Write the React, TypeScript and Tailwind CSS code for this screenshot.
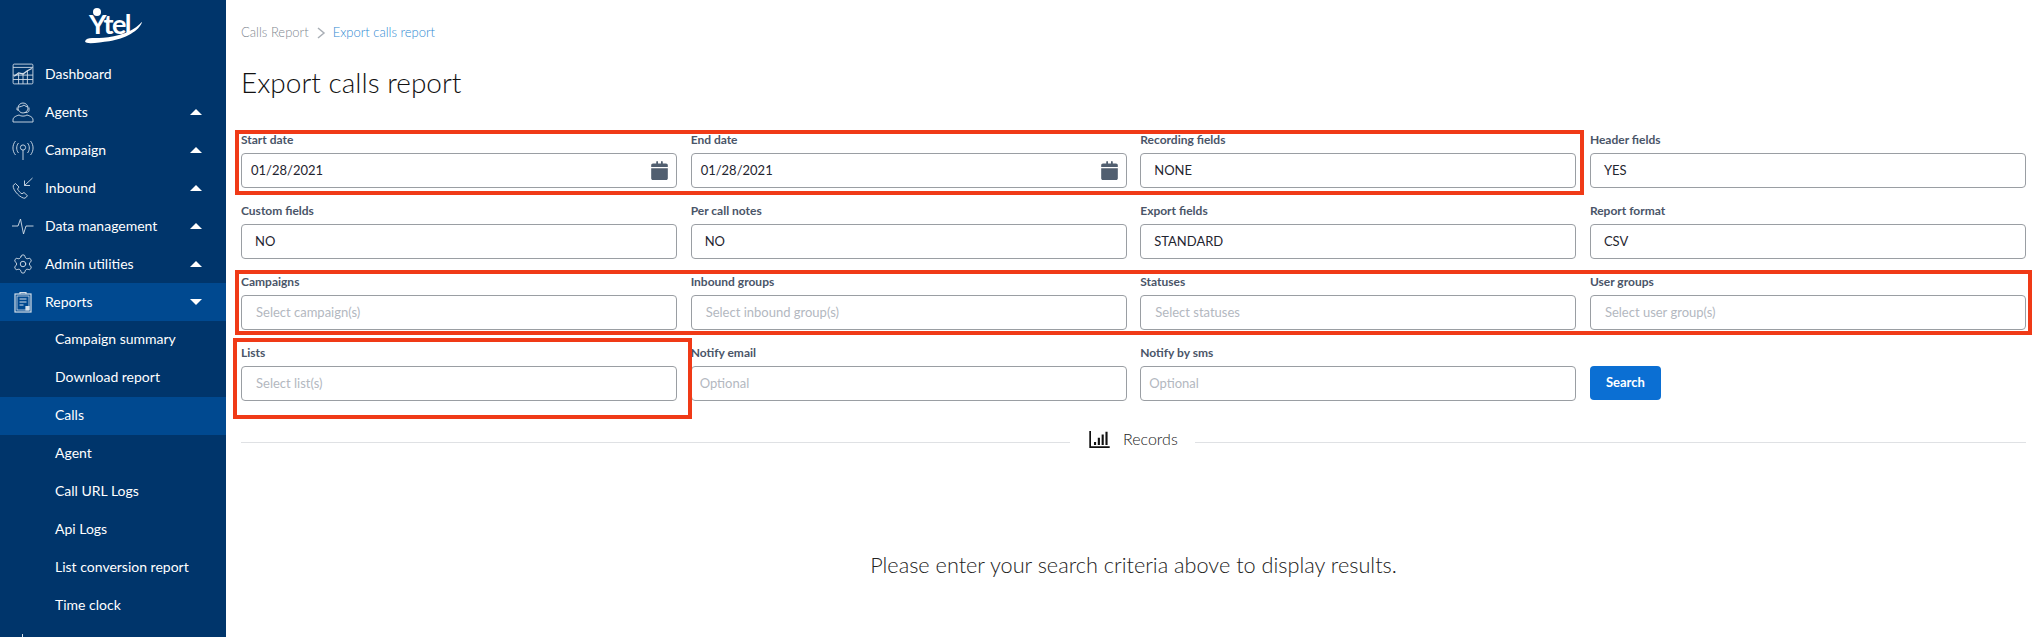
import React from "react";
import { Settings } from "lucide-react";

type IconProps = { className?: string };

const DashboardIcon = ({ className }: IconProps) => (
  <svg viewBox="0 0 20 20" className={className} fill="none" stroke="currentColor" strokeWidth="0.8">
    <rect x="1" y="1" width="18" height="18" rx="1" />
    <path d="M1 4h18M1 11h18M1 15h18M6 10v9M10 9v10M14 7v12" />
    <path d="M2 12l4-3 4 1 4-3 4-2" strokeWidth="1.2" />
  </svg>
);

const AgentIcon = ({ className }: IconProps) => (
  <svg viewBox="0 0 22 22" className={className} fill="none" stroke="currentColor" strokeWidth="0.9">
    <circle cx="11" cy="7" r="5" />
    <path d="M6 6c2 0 5-1 6-2 1 1 3 2 4 2" />
    <path d="M5 6.500v2.500h1.400M17 6.500v3c0 1-1 2-3 2h-1.500" />
    <path d="M1 21v-2c0-3 3-4 6-5 2 1.500 6 1.500 8 0 3 1 6 2 6 5v2z" />
  </svg>
);

const CampaignIcon = ({ className }: IconProps) => (
  <svg viewBox="0 0 22 22" className={className} fill="none" stroke="currentColor" strokeWidth="0.9">
    <circle cx="11" cy="8.500" r="2.600" />
    <path d="M11 11v10" />
    <path d="M6.500 4c-2.400 2.800-2.400 7.200 0 10M15.500 4c2.400 2.800 2.400 7.200 0 10" />
    <path d="M3.500 2c-3.400 4-3.400 10 0 14M18.500 2c3.400 4 3.400 10 0 14" />
  </svg>
);

const InboundIcon = ({ className }: IconProps) => (
  <svg viewBox="0 0 22 22" className={className} fill="none" stroke="currentColor" strokeWidth="0.9">
    <path d="M3.500 6.500L1.200 8.500c-.4 2.500 1.800 6 4.300 8.500 2.500 2.500 5.500 4.500 7.500 4.200l2.500-2.400-3.500-3.300-2 1.300c-1.500-.7-3.700-3-4.500-4.800l1.500-2z" />
    <path d="M20.500 1l-8 7.500M12.500 3.500v5h5.500" />
  </svg>
);

const PulseIcon = ({ className }: IconProps) => (
  <svg viewBox="0 0 22 22" className={className} fill="none" stroke="currentColor" strokeWidth="0.9">
    <path d="M0 11h6l2.500-7 3 15 2.500-8h7.500" />
  </svg>
);

const GearIcon = ({ className }: IconProps) => <Settings className={className} strokeWidth={1} />;

const ClipboardIcon = ({ className }: IconProps) => (
  <svg viewBox="0 0 20 22" className={className} fill="none" stroke="currentColor" strokeWidth="1.2">
    <rect x="2" y="3" width="16" height="18" />
    <rect x="4" y="5" width="12" height="14" strokeWidth="0.8" />
    <path d="M7 3V1.500h6V3" />
    <path d="M6.500 8h7M6.500 11h7M6.500 14h4" />
    <path d="M13 15.500h3V19h-3z" fill="currentColor" />
  </svg>
);

const CalendarIcon = ({ className }: IconProps) => (
  <svg viewBox="0 0 448 512" className={className} fill="currentColor">
    <path d="M152 64h32V24c0-13-11-24-24-24s-24 11-24 24v40zm112 0h48V24c0-13-11-24-24-24s-24 11-24 24v40zM48 64C21 64 0 85 0 112v48h448v-48c0-27-21-48-48-48H48zM0 192v272c0 27 21 48 48 48h352c27 0 48-21 48-48V192H0z" />
  </svg>
);

const BarsIcon = ({ className }: IconProps) => (
  <svg viewBox="0 0 24 20" className={className} fill="currentColor">
    <path d="M0 0h2v18h22v2H0z" />
    <path d="M5.500 13h2.500v3.500H5.500zM10 8h2.500v8.500H10zM14.500 4h2.500v12.500h-2.500zM19 1h2.500v15.500H19z" />
  </svg>
);

const menu = [
  { label: "Dashboard", icon: DashboardIcon },
  { label: "Agents", icon: AgentIcon, caret: "up" },
  { label: "Campaign", icon: CampaignIcon, caret: "up" },
  { label: "Inbound", icon: InboundIcon, caret: "up" },
  { label: "Data management", icon: PulseIcon, caret: "up" },
  { label: "Admin utilities", icon: GearIcon, caret: "up" },
  { label: "Reports", icon: ClipboardIcon, caret: "down", active: true },
];

const subMenu = [
  "Campaign summary",
  "Download report",
  "Calls",
  "Agent",
  "Call URL Logs",
  "Api Logs",
  "List conversion report",
  "Time clock",
];

type Field = {
  label: string;
  value?: string;
  placeholder?: string;
  date?: boolean;
  indent?: "none" | "small" | "large";
};

const fields: Field[] = [
  { label: "Start date", value: "01/28/2021", date: true },
  { label: "End date", value: "01/28/2021", date: true },
  { label: "Recording fields", value: "NONE" },
  { label: "Header fields", value: "YES" },
  { label: "Custom fields", value: "NO" },
  { label: "Per call notes", value: "NO" },
  { label: "Export fields", value: "STANDARD" },
  { label: "Report format", value: "CSV" },
  { label: "Campaigns", placeholder: "Select campaign(s)", indent: "large" },
  { label: "Inbound groups", placeholder: "Select inbound group(s)", indent: "large" },
  { label: "Statuses", placeholder: "Select statuses", indent: "large" },
  { label: "User groups", placeholder: "Select user group(s)", indent: "large" },
  { label: "Lists", placeholder: "Select list(s)", indent: "large" },
  { label: "Notify email", placeholder: "Optional", indent: "small" },
  { label: "Notify by sms", placeholder: "Optional", indent: "small" },
];

const Sidebar = () => (
  <aside className="w-[226px] shrink-0 overflow-hidden bg-[#00356b] text-white">
    <div className="relative h-[55px]">
      <span className="absolute left-[89px] top-[9px] text-[27px] font-bold leading-[30px] tracking-[-1.500px]">
        Ytel
      </span>
      <svg viewBox="0 0 60 22" className="absolute left-[85px] top-[19px] h-[27px] w-[58px]" fill="#fff">
        <path d="M0 20c2-5 10-2 24-4C40 14 52 8 59 0c-2 9-18 18-34 20-10 1-24 4-25 0z" />
      </svg>
      <span className="absolute left-[93px] top-[8px] h-[8px] w-[8px] rounded-full bg-white" />
    </div>
    <nav>
      {menu.map((item) => {
        const Icon = item.icon;
        return (
          <div
            key={item.label}
            className={`flex h-[38px] items-center pl-[12px] pr-[24px] ${item.active ? "bg-[#004990]" : ""}`}
          >
            <Icon className="h-[22px] w-[22px] shrink-0 text-[#d5dfe9]" />
            <span className="ml-[11px] flex-1 text-[14px] leading-none">{item.label}</span>
            {item.caret === "up" && (
              <span className="h-0 w-0 border-x-[6px] border-b-[6px] border-x-transparent border-b-white" />
            )}
            {item.caret === "down" && (
              <span className="h-0 w-0 border-x-[6px] border-t-[6px] border-x-transparent border-t-white" />
            )}
          </div>
        );
      })}
      {subMenu.map((label) => (
        <div
          key={label}
          className={`flex h-[38px] items-center pb-[3px] pl-[55px] text-[14px] ${label === "Calls" ? "bg-[#004990]" : ""}`}
        >
          {label}
        </div>
      ))}
      {/* top of the next menu icon, cut off by the window */}
      <div className="ml-[22px] mt-[9px] h-[3px] w-px bg-[#d5dfe9]" />
    </nav>
  </aside>
);

const FieldBox = ({ field }: { field: Field }) => {
  const padding = field.date
    ? "pl-[9px]"
    : field.indent === "small"
      ? "pl-[8px]"
      : field.indent === "large"
        ? "pl-[14px]"
        : "pl-[13px]";
  return (
    <div>
      <div className="text-[12px] font-bold leading-[16px] text-[#4a5568]">{field.label}</div>
      <div
        className={`mt-[5px] flex h-[35px] items-center justify-between rounded-[4px] border border-[#9a9ea3] bg-white pr-[8px] text-[13px] ${padding}`}
      >
        {field.value ? (
          <span className="text-[#1f2530]">{field.value}</span>
        ) : (
          <span className="text-[#b3b8bf]">{field.placeholder}</span>
        )}
        {field.date && <CalendarIcon className="h-[19px] w-[17px] text-[#515f70]" />}
      </div>
    </div>
  );
};

export default function App() {
  return (
    <div className="flex h-[637px] overflow-hidden bg-white font-['Lato',sans-serif]">
      <Sidebar />
      <main className="relative flex-1 pl-[15px] pr-[11px] pt-[24px]">
        <div className="flex items-center text-[13px] font-light leading-[17px]">
          <span className="text-[#7f8890]">Calls Report</span>
          <svg viewBox="0 0 10 12" className="mx-[7px] h-[12px] w-[10px]" fill="none" stroke="#a9afb6" strokeWidth="1.500">
            <path d="M2 1l6 5-6 5" />
          </svg>
          <span className="text-[#2f8ad2]">Export calls report</span>
        </div>
        <h1 className="mt-[24px] text-[28px] font-light leading-[34px] text-[#111]">Export calls report</h1>

        <div className="mt-[33px] grid grid-cols-4 gap-x-[13.500px] gap-y-[15px]">
          {fields.map((field) => (
            <FieldBox key={field.label} field={field} />
          ))}
          <div className="pt-[21px]">
            <button className="h-[34px] w-[71px] rounded-[4px] bg-[#0b6fd3] text-[13px] font-bold text-white">
              Search
            </button>
          </div>
        </div>

        <div className="relative mt-[29px] flex items-center">
          <div className="h-px w-[829px] bg-[#dfe1e4]" />
          <div className="flex w-[125px] -translate-y-[3px] items-center pl-[18px]">
            <BarsIcon className="h-[17px] w-[23px] text-[#111]" />
            <span className="ml-[12px] text-[16px] font-light text-[#222]">Records</span>
          </div>
          <div className="h-px flex-1 bg-[#dfe1e4]" />
        </div>

        <p className="mt-[95px] text-center text-[21.700px] font-light text-[#222]">
          Please enter your search criteria above to display results.
        </p>

        {/* red annotation boxes drawn over the form */}
        <div className="absolute left-[9px] top-[130px] h-[65px] w-[1349px] border-[4px] border-[#f03a17]" />
        <div className="absolute left-[9px] top-[270px] h-[65px] w-[1797px] border-[4px] border-[#f03a17]" />
        <div className="absolute left-[7px] top-[338px] h-[81px] w-[459px] border-[4px] border-[#f03a17]" />
      </main>
    </div>
  );
}
